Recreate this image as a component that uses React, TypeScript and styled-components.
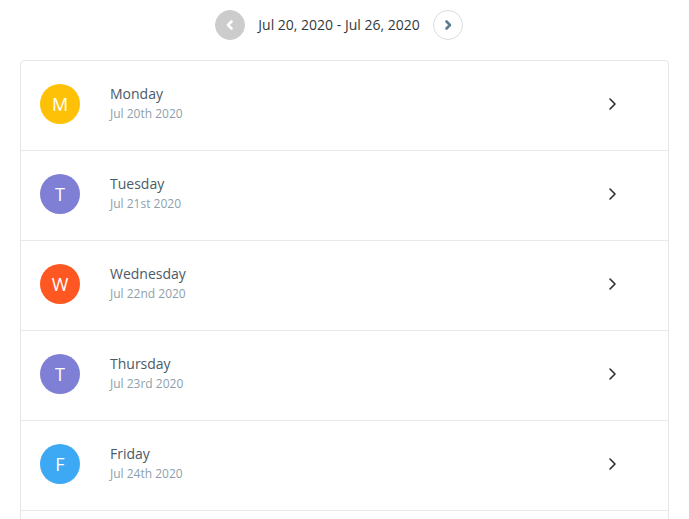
import React from "react";
import styled, { createGlobalStyle } from "styled-components";

const GlobalStyle = createGlobalStyle`
  html, body {
    margin: 0;
    padding: 0;
    background: #ffffff;
    font-family: "Open Sans", "Noto Sans", Arial, sans-serif;
  }
  * { box-sizing: border-box; }
`;

const Page = styled.div`
  display: flex;
  flex-direction: column;
  padding: 10px 20px 20px;
`;

const WeekNav = styled.div`
  display: flex;
  align-items: center;
  justify-content: center;
  gap: 13px;
  height: 30px;
  margin: 0 11px 20px 0;
`;

const NavButton = styled.button<{ $disabled?: boolean }>`
  width: 30px;
  height: 30px;
  border-radius: 50%;
  padding: 0;
  display: flex;
  align-items: center;
  justify-content: center;
  cursor: pointer;
  background: ${(p) => (p.$disabled ? "#cccccc" : "#ffffff")};
  border: 1px solid ${(p) => (p.$disabled ? "#cccccc" : "#dcdcdc")};
  color: ${(p) => (p.$disabled ? "#ffffff" : "#5d7d8d")};
`;

const RangeLabel = styled.span`
  font-size: 14px;
  color: #333b40;
  line-height: 20px;
`;

const Card = styled.div`
  border: 1px solid #e6e6e6;
  border-radius: 4px;
  display: flex;
  flex-direction: column;
`;

const Row = styled.div`
  display: flex;
  align-items: center;
  height: 90px;
  padding: 0 0 3px 19px;
  border-bottom: 1px solid #e9e9e9;
`;

const Avatar = styled.div<{ $color: string }>`
  width: 40px;
  height: 40px;
  border-radius: 50%;
  background: ${(p) => p.$color};
  color: #ffffff;
  font-size: 18px;
  display: flex;
  align-items: center;
  justify-content: center;
  flex-shrink: 0;
`;

const Info = styled.div`
  display: flex;
  flex-direction: column;
  gap: 2px;
  margin: 0 0 2px 30px;
  flex: 1;
`;

const DayName = styled.div`
  font-size: 14px;
  line-height: 19px;
  color: #4a5a66;
`;

const DayDate = styled.div`
  font-size: 12px;
  line-height: 17px;
  color: #8e9fab;
`;

const RowArrow = styled.div`
  width: 20px;
  height: 20px;
  display: flex;
  align-items: center;
  justify-content: center;
  margin-right: 46px;
  color: #2e2e2e;
`;

const Chevron = ({ dir, width = 2.6 }: { dir: "left" | "right"; width?: number }) => (
  <svg width="12" height="12" viewBox="0 0 12 12" fill="none">
    <path
      d={dir === "left" ? "M7.5 2.5 L4 6 L7.5 9.5" : "M4.5 2.5 L8 6 L4.5 9.5"}
      stroke="currentColor"
      strokeWidth={width}
      strokeLinecap="round"
      strokeLinejoin="round"
    />
  </svg>
);

const RowChevron = () => (
  <svg width="10" height="14" viewBox="0 0 10 14" fill="none">
    <path d="M3 2 L8 7 L3 12" stroke="currentColor" strokeWidth="1.6" strokeLinecap="round" strokeLinejoin="round" />
  </svg>
);

const days = [
  { name: "Monday", date: "Jul 20th 2020", color: "#FFC107" },
  { name: "Tuesday", date: "Jul 21st 2020", color: "#7F7FD5" },
  { name: "Wednesday", date: "Jul 22nd 2020", color: "#FF5722" },
  { name: "Thursday", date: "Jul 23rd 2020", color: "#7F7FD5" },
  { name: "Friday", date: "Jul 24th 2020", color: "#3DA9F5" },
  { name: "Saturday", date: "Jul 25th 2020", color: "#4CAF50" },
  { name: "Sunday", date: "Jul 26th 2020", color: "#E91E63" },
];

export default function App() {
  return (
    <>
      <GlobalStyle />
      <Page>
        <WeekNav>
          <NavButton $disabled aria-label="Previous week">
            <Chevron dir="left" />
          </NavButton>
          <RangeLabel>Jul 20, 2020 - Jul 26, 2020</RangeLabel>
          <NavButton aria-label="Next week">
            <Chevron dir="right" />
          </NavButton>
        </WeekNav>
        <Card>
          {days.map((d) => (
            <Row key={d.name}>
              <Avatar $color={d.color}>{d.name[0]}</Avatar>
              <Info>
                <DayName>{d.name}</DayName>
                <DayDate>{d.date}</DayDate>
              </Info>
              <RowArrow>
                <RowChevron />
              </RowArrow>
            </Row>
          ))}
        </Card>
      </Page>
    </>
  );
}
